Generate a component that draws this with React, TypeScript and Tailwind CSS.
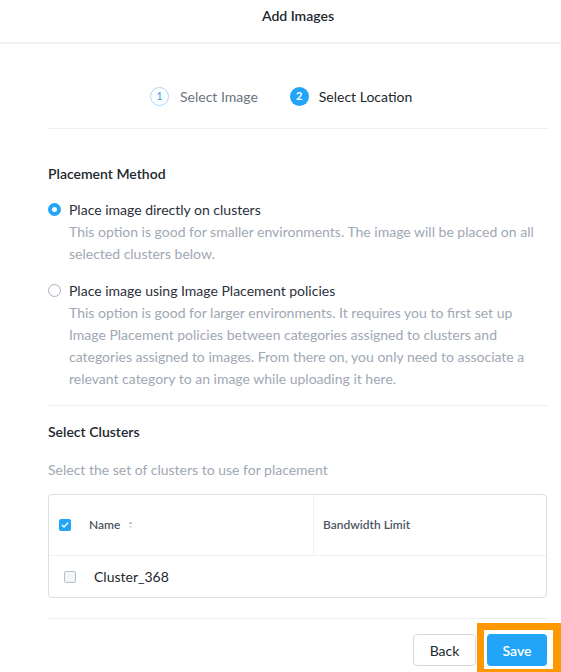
import React, { useState } from 'react';

const font = { fontFamily: '"Lato", "Open Sans", sans-serif' };

const Radio: React.FC<{ checked: boolean }> = ({ checked }) => (
  <span
    className={`mt-[4px] flex h-[13px] w-[13px] shrink-0 items-center justify-center rounded-full ${
      checked ? 'bg-[#22a5f7]' : 'border border-[#a7b0bb] bg-white'
    }`}
  >
    {checked && <span className="h-[5px] w-[5px] rounded-full bg-white" />}
  </span>
);

const CheckBox: React.FC<{ checked: boolean }> = ({ checked }) =>
  checked ? (
    <span className="flex h-[12px] w-[12px] items-center justify-center rounded-[2px] bg-[#22a5f7]">
      <svg width="8" height="8" viewBox="0 0 8 8" fill="none">
        <path d="M1.2 4.2l1.8 1.8 3.8-4" stroke="white" strokeWidth="1.3" strokeLinecap="round" strokeLinejoin="round" />
      </svg>
    </span>
  ) : (
    <span className="block h-[12px] w-[12px] rounded-[2px] border border-[#b9c0c9] bg-[#f4f5f7]" />
  );

const Lines: React.FC<{ lines: string[] }> = ({ lines }) => (
  <div className="text-[14px] text-[#a0a8b4]">
    {lines.map((l) => (
      <span key={l} className="block whitespace-nowrap">
        {l}
      </span>
    ))}
  </div>
);

export default function App() {
  const [method, setMethod] = useState<'direct' | 'policy'>('direct');

  return (
    <div className="h-[672px] w-[561px] overflow-hidden bg-white" style={font}>
      {/* Header */}
      <div className="flex h-[44px] items-start justify-center border-b-2 border-[#f0f1f3] pt-[5px] pl-[48px] pr-[13px]">
        <span className="text-[14px] font-semibold text-[#22272e]">Add Images</span>
      </div>

      <div className="pl-[48px] pr-[13px]">
        {/* Stepper */}
        <div className="flex items-center border-b border-[#eef0f2] pt-[43px] pb-[22px] pl-[102px]">
          <span className="flex h-[19px] w-[19px] items-center justify-center rounded-full border border-[#a9d8fb] text-[11px] text-[#22a5f7]">
            1
          </span>
          <span className="ml-[11px] text-[14px] leading-[19px] text-[#6a7380]">Select Image</span>
          <span className="ml-[32px] flex h-[19px] w-[19px] items-center justify-center rounded-full bg-[#22a5f7] text-[11px] font-bold text-white">
            2
          </span>
          <span className="ml-[10px] text-[14px] leading-[19px] text-[#22272e]">Select Location</span>
        </div>

        {/* Placement Method */}
        <div className="border-b border-[#eef0f2] pb-[15px]">
          <div className="pt-[34px] text-[14px] font-semibold text-[#22272e]">Placement Method</div>

          <button className="mt-[15px] flex w-full gap-[8px] text-left" onClick={() => setMethod('direct')}>
            <Radio checked={method === 'direct'} />
            <div className="leading-[22px]">
              <div className="text-[14px] text-[#2b2f3b]">Place image directly on clusters</div>
              <Lines
                lines={[
                  'This option is good for smaller environments. The image will be placed on all',
                  'selected clusters below.',
                ]}
              />
            </div>
          </button>

          <button className="mt-[15px] flex w-full gap-[8px] text-left" onClick={() => setMethod('policy')}>
            <Radio checked={method === 'policy'} />
            <div className="leading-[22px]">
              <div className="text-[14px] text-[#2b2f3b]">Place image using Image Placement policies</div>
              <Lines
                lines={[
                  'This option is good for larger environments. It requires you to first set up',
                  'Image Placement policies between categories assigned to clusters and',
                  'categories assigned to images. From there on, you only need to associate a',
                  'relevant category to an image while uploading it here.',
                ]}
              />
            </div>
          </button>
        </div>

        {/* Select Clusters */}
        <div className="border-b border-[#eef0f2] pb-[20px]">
          <div className="pt-[15px] text-[14px] font-semibold text-[#22272e]">Select Clusters</div>
          <div className="mt-[17px] text-[14px] text-[#a0a8b4]">Select the set of clusters to use for placement</div>

          <div className="mt-[14px] mr-[1px] overflow-hidden rounded-[4px] border border-[#dcdfe3]">
            <div className="flex h-[61px] border-b border-[#eef0f2]">
              <div className="flex w-[265px] items-center border-r border-[#eef0f2] pl-[10px]">
                <CheckBox checked />
                <span className="ml-[18px] text-[12px] font-semibold text-[#4c5563]">Name</span>
                <svg className="ml-[8px]" width="5" height="8" viewBox="0 0 5 8">
                  <path d="M2.5 0.5L4.5 3H0.5z" fill="#b4bbc4" />
                  <path d="M2.5 7.5L4.5 5H0.5z" fill="#d8dce1" />
                </svg>
              </div>
              <div className="flex flex-1 items-center pl-[9px] text-[12px] font-semibold text-[#4c5563]">
                Bandwidth Limit
              </div>
            </div>
            <div className="flex h-[41px] items-center pl-[15px]">
              <CheckBox checked={false} />
              <span className="ml-[18px] text-[14px] text-[#22272e]">Cluster_368</span>
            </div>
          </div>
        </div>

        {/* Footer */}
        <div className="flex items-start justify-end">
          <button className="mt-[15px] h-[32px] w-[63px] rounded-[4px] border border-[#d5d9de] bg-white text-[14px] text-[#22272e]">
            Back
          </button>
          <div className="mt-[4px] -mr-[13px] ml-[1px] border-[7px] border-r-[8px] border-[#ff9800] bg-white pt-[4px] pl-[3px] pr-[6px] pb-[3px]">
            <button className="block h-[32px] w-[60px] rounded-[4px] bg-[#22a5f7] text-[14px] font-semibold text-white">
              Save
            </button>
          </div>
        </div>
      </div>
    </div>
  );
}
